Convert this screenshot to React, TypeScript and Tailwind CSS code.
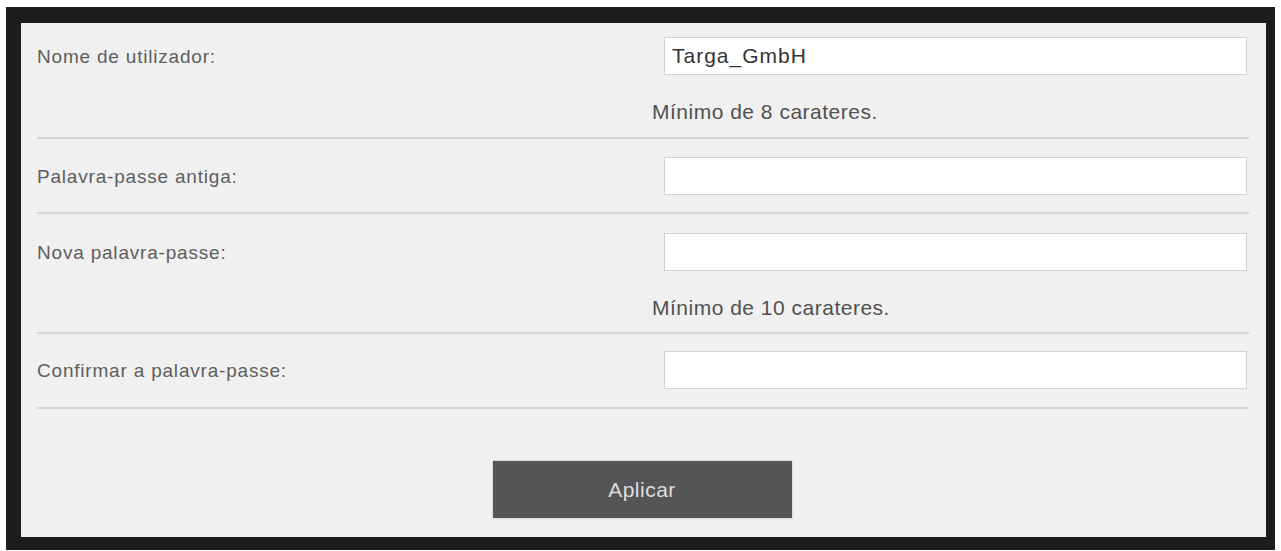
import React, { useState } from "react";

type Field = {
  id: string;
  label: string;
  type: string;
  hint?: string;
  pad: string;
};

const fields: Field[] = [
  { id: "username", label: "Nome de utilizador:", type: "text", hint: "Mínimo de 8 carateres.", pad: "pt-[14px] pb-[15px]" },
  { id: "oldPassword", label: "Palavra-passe antiga:", type: "password", pad: "pt-[18px] pb-[17px]" },
  { id: "newPassword", label: "Nova palavra-passe:", type: "password", hint: "Mínimo de 10 carateres.", pad: "pt-[19px] pb-[14px]" },
  { id: "confirmPassword", label: "Confirmar a palavra-passe:", type: "password", pad: "pt-[17px] pb-[18px]" },
];

const App: React.FC = () => {
  const [values, setValues] = useState<Record<string, string>>({
    username: "Targa_GmbH",
    oldPassword: "",
    newPassword: "",
    confirmPassword: "",
  });

  return (
    <div className="w-[1281px] h-[551px] bg-white pt-[7px] pl-[6px] pr-[6px] pb-[1px] font-['Liberation_Sans',Arial,sans-serif]">
      <div className="h-full bg-[#1d1d1d] pt-[16px] pl-[15px] pr-[9px] pb-[13px]">
        <form
          className="h-full bg-[#f0f0f0] pl-[16px] pr-[17px]"
          onSubmit={(e) => e.preventDefault()}
        >
          {fields.map((field) => (
            <div key={field.id} className={`border-b-2 border-[#d5d5d5] ${field.pad}`}>
              <div className="flex items-center">
                <label
                  htmlFor={field.id}
                  className="w-[627px] pt-[2px] text-[19px] tracking-[0.8px] text-[#5e5e5e]"
                >
                  {field.label}
                </label>
                <input
                  id={field.id}
                  type={field.type}
                  value={values[field.id]}
                  onChange={(e) => setValues({ ...values, [field.id]: e.target.value })}
                  className="flex-1 mr-[2px] h-[38px] bg-white border border-[#d2d2d2] px-[7px] text-[21px] tracking-[1px] text-[#333] focus:outline-none"
                />
              </div>
              {field.hint && (
                <div className="mt-[27px] ml-[615px] h-[20px] leading-[20px] text-[21px] tracking-[0.5px] text-[#505050]">
                  {field.hint}
                </div>
              )}
            </div>
          ))}
          <div className="flex justify-center pt-[52px] pr-[2px]">
            <button
              type="submit"
              className="w-[299px] h-[57px] bg-[#555456] text-[21px] tracking-[0.5px] text-[#dedede] shadow-[0_0_2px_rgba(0,0,0,0.25)]"
            >
              Aplicar
            </button>
          </div>
        </form>
      </div>
    </div>
  );
};

export default App;
